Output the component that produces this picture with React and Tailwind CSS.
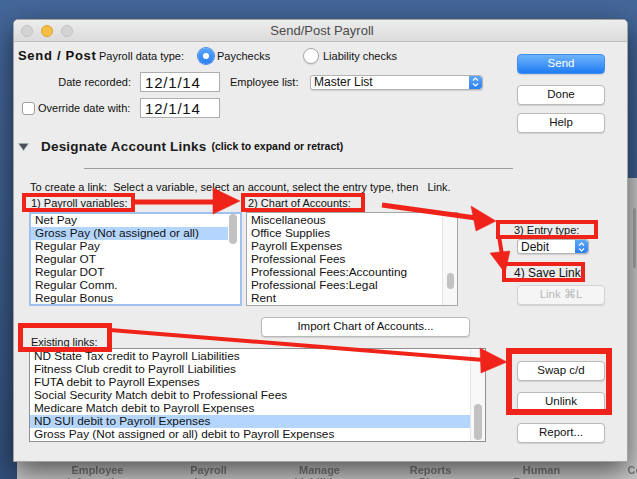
import React from "react";

const payrollVars = [
  "Net Pay",
  "Gross Pay (Not assigned or all)",
  "Regular Pay",
  "Regular OT",
  "Regular DOT",
  "Regular Comm.",
  "Regular Bonus",
];

const accounts = [
  "Miscellaneous",
  "Office Supplies",
  "Payroll Expenses",
  "Professional Fees",
  "Professional Fees:Accounting",
  "Professional Fees:Legal",
  "Rent",
];

const links = [
  "ND State Tax credit to Payroll Liabilities",
  "Fitness Club credit to Payroll Liabilities",
  "FUTA debit to Payroll Expenses",
  "Social Security Match debit to Professional Fees",
  "Medicare Match debit to Payroll Expenses",
  "ND SUI debit to Payroll Expenses",
  "Gross Pay (Not assigned or all) debit to Payroll Expenses",
];

const toolbar = [
  ["Employee", "Information"],
  ["Payroll", "Items"],
  ["Manage", "Liabilities"],
  ["Reports", "Plus"],
  ["Human", "Resources"],
  ["Company", "Info"],
];

function MacButton({ children, primary, disabled, className = "" }) {
  const look = primary
    ? "border-[#3f8ef0] bg-gradient-to-b from-[#6cb3fb] to-[#1c7cf4] text-white"
    : disabled
    ? "border-[#d3d3d3] bg-[#f5f5f5] text-[#b9b9b9]"
    : "border-[#b9b9b9] bg-white text-[#111]";
  return (
    <div
      className={`flex h-[20px] w-[88px] items-center justify-center rounded-[4px] border text-[11.5px] shadow-[0_1px_1px_rgba(0,0,0,0.12)] ${look} ${className}`}
    >
      {children}
    </div>
  );
}

function Stepper() {
  return (
    <div className="flex h-full w-[13px] flex-col items-center justify-center rounded-r-[3px] bg-gradient-to-b from-[#5ea7fa] to-[#2a7ff1]">
      <svg width="7" height="10" viewBox="0 0 7 10" fill="none" stroke="white" strokeWidth="1.2">
        <path d="M1 3.5 L3.5 1 L6 3.5" />
        <path d="M1 6.5 L3.5 9 L6 6.5" />
      </svg>
    </div>
  );
}

function Select({ label, className }) {
  return (
    <div
      className={`flex h-[15px] items-stretch overflow-hidden rounded-[3px] border border-[#b4b4b4] bg-white shadow-[0_1px_1px_rgba(0,0,0,0.12)] ${className}`}
    >
      <div className="flex flex-1 items-center pl-[3px] text-[12px] leading-none text-[#111]">{label}</div>
      <Stepper />
    </div>
  );
}

function Radio({ on }) {
  return on ? (
    <div className="flex h-[16px] w-[16px] items-center justify-center rounded-full bg-gradient-to-b from-[#5aa6fb] to-[#2a7ff1] shadow-[0_0_0_1px_#3b86ea]">
      <div className="h-[6px] w-[6px] rounded-full bg-white" />
    </div>
  ) : (
    <div className="h-[16px] w-[16px] rounded-full border border-[#a9a9a9] bg-white shadow-[0_1px_1px_rgba(0,0,0,0.1)]" />
  );
}

function DateInput() {
  return (
    <div className="flex h-[20px] w-[80px] items-center border border-[#aeaeae] bg-white pl-[4px] text-[15px] leading-none tracking-[0.8px] text-[#111]">
      12/1/14
    </div>
  );
}

function Rows({ items, selected }) {
  return (
    <div className="flex-1 overflow-hidden">
      {items.map((t, i) => (
        <div
          key={t}
          className={`h-[13px] whitespace-nowrap pl-[4px] text-[11.8px] leading-[13px] text-[#111] ${
            i === selected ? "bg-[#b4d6fe]" : ""
          }`}
        >
          {t}
        </div>
      ))}
    </div>
  );
}

function RedBox({ className }) {
  return <div className={`pointer-events-none absolute border-[#f0231b] ${className}`} />;
}

export default function App() {
  return (
    <div className="relative h-[479px] w-[637px] overflow-hidden bg-gradient-to-b from-[#44679a] via-[#3c5d8c] to-[#324f7a] font-['Liberation_Sans',Arial,sans-serif]">
      {/* app window behind the dialog */}
      <div className="absolute left-[17px] top-[178px] flex h-[320px] w-[660px] flex-col justify-end bg-[#cdcdcd]">
        <div className="absolute left-[616px] top-[30px] h-[60px] w-[3px] rounded bg-[#a9a9a9]" />
        <div className="flex pb-[10px] pl-[25px] blur-[0.4px]">
          {toolbar.map(([a, b]) => (
            <div key={a} className="w-[111px] shrink-0 text-center text-[11px] font-bold leading-[12px] text-[#7c7c7c]">
              <div>{a}</div>
              <div>{b}</div>
            </div>
          ))}
        </div>
      </div>

      {/* dialog */}
      <div className="absolute left-[13px] top-[19px] flex h-[443px] w-[615px] flex-col overflow-hidden rounded-t-[5px] border border-[#a3a3a3] bg-[#ececec] shadow-[0_10px_28px_rgba(0,0,0,0.6)]">
        <div className="relative flex h-[22px] shrink-0 items-center border-b border-[#bdbdbd] bg-gradient-to-b from-[#ededed] to-[#dbdbdb] pl-[7px]">
          <div className="flex gap-[8px]">
            <div className="h-[12px] w-[12px] rounded-full border border-[#c2c2c2] bg-[#d4d4d4]" />
            <div className="h-[12px] w-[12px] rounded-full border border-[#e0a12e] bg-[#f7be45]" />
            <div className="h-[12px] w-[12px] rounded-full border border-[#c2c2c2] bg-[#d4d4d4]" />
          </div>
          <div className="flex-1 pr-[56px] text-center text-[13px] text-[#4a4a4a]">Send/Post Payroll</div>
        </div>

        <div className="flex flex-1">
          {/* left column */}
          <div className="flex w-[500px] flex-col text-[11px] text-[#111]">
            <div className="mt-[4px] flex h-[20px] items-center">
              <div className="ml-[4px] w-[81px] text-[13px] font-bold tracking-[0.7px]">Send / Post</div>
              <div className="w-[99px]">Payroll data type:</div>
              <div className="flex w-[105px] items-center">
                <Radio on />
                <span className="ml-[3px]">Paychecks</span>
              </div>
              <div className="flex items-center">
                <Radio />
                <span className="ml-[4px]">Liability checks</span>
              </div>
            </div>

            <div className="mt-[6px] flex h-[20px] items-center">
              <div className="w-[117px] text-right">Date recorded:</div>
              <div className="ml-[9px]">
                <DateInput />
              </div>
              <div className="ml-[10px] w-[80px]">Employee list:</div>
              <Select label="Master List" className="w-[173px]" />
            </div>

            <div className="mt-[6px] flex h-[20px] items-center">
              <div className="ml-[8px] h-[13px] w-[13px] rounded-[3px] border border-[#9f9f9f] bg-white" />
              <div className="ml-[3px] w-[102px]">Override date with:</div>
              <DateInput />
            </div>

            <div className="mt-[21px] flex h-[16px] items-center">
              <svg className="ml-[4px]" width="11" height="8" viewBox="0 0 11 8">
                <path d="M0.5 0.5 L10.5 0.5 L5.5 7.5 Z" fill="#4e4d5c" stroke="#9bb" strokeWidth="0.6" />
              </svg>
              <div className="ml-[12px] text-[13.5px] font-bold tracking-[0.2px] text-[#1a1a1a]">Designate Account Links</div>
              <div className="ml-[5px] text-[10.5px] font-bold">(click to expand or retract)</div>
            </div>

            <div className="ml-[70px] mt-[13px] h-px w-[429px] bg-[#9c9c9c]" />

            <div className="ml-[16px] mt-[11px] flex h-[14px] items-center whitespace-pre">
              To create a link:  Select a variable, select an account, select the entry type, then   Link.
            </div>

            <div className="mt-[2px] flex h-[14px] items-center">
              <div className="ml-[17px] w-[217px]">1) Payroll variables:</div>
              <div>2) Chart of Accounts:</div>
            </div>

            <div className="mt-[2px] flex h-[94px]">
              <div className="ml-[15px] flex w-[213px] border-[2px] border-[#9ec1ee] bg-white">
                <Rows items={payrollVars} selected={1} />
                <div className="w-[12px]">
                  <div className="ml-[1px] h-[30px] w-[8px] rounded-full bg-[#c2c2c2]" />
                </div>
              </div>
              <div className="ml-[4px] flex w-[212px] border border-[#a6a6a6] bg-white pt-[1px]">
                <Rows items={accounts} />
                <div className="w-[15px] border-l border-[#e4e4e4] bg-[#f8f8f8]">
                  <div className="ml-[4px] mt-[59px] h-[16px] w-[7px] rounded-full bg-[#c2c2c2]" />
                </div>
              </div>
            </div>

            <div className="mt-[11px] flex h-[20px]">
              <MacButton className="ml-[247px] w-[209px]">Import Chart of Accounts...</MacButton>
            </div>

            <div className="ml-[17px] flex h-[11px] items-end text-[11px] leading-[11px]">Existing links:</div>

            <div className="ml-[15px] flex h-[94px] w-[457px] border border-[#8f8f8f] bg-white pt-[1px]">
              <Rows items={links} selected={5} />
              <div className="w-[15px] border-l border-[#e4e4e4] bg-[#f8f8f8]">
                <div className="ml-[3px] mt-[54px] h-[36px] w-[8px] rounded-full bg-[#c2c2c2]" />
              </div>
            </div>
          </div>

          {/* right column */}
          <div className="flex w-[95px] flex-col text-[11px] text-[#111]">
            <MacButton primary className="ml-[3px] mt-[12px]">Send</MacButton>
            <MacButton className="ml-[3px] mt-[11px]">Done</MacButton>
            <MacButton className="ml-[3px] mt-[8px]">Help</MacButton>
            <div className="mt-[90px] flex h-[14px] items-center">3) Entry type:</div>
            <Select label="Debit" className="ml-[3px] mt-[2px] h-[14px] w-[72px]" />
            <div className="mt-[12px] flex h-[14px] items-center text-[12px]">4) Save Link</div>
            <MacButton disabled className="ml-[3px] mt-[5px] h-[19px]">Link ⌘L</MacButton>
            <MacButton className="ml-[3px] mt-[56px]">Swap c/d</MacButton>
            <MacButton className="ml-[3px] mt-[11px]">Unlink</MacButton>
            <MacButton className="ml-[3px] mt-[11px]">Report...</MacButton>
          </div>
        </div>
      </div>

      {/* red annotations */}
      <RedBox className="left-[22px] top-[193px] h-[19px] w-[113px] border-[4px]" />
      <RedBox className="left-[241px] top-[193px] h-[19px] w-[124px] border-[4px]" />
      <RedBox className="left-[496px] top-[220px] h-[19px] w-[102px] border-[4px]" />
      <RedBox className="left-[502px] top-[262px] h-[20px] w-[83px] border-[4px]" />
      <RedBox className="left-[18px] top-[323px] h-[29px] w-[94px] border-[5px]" />
      <RedBox className="left-[506px] top-[348px] h-[67px] w-[106px] border-[6px]" />

      <svg className="pointer-events-none absolute left-0 top-0" width="637" height="479" viewBox="0 0 637 479">
        <g fill="#f0231b" stroke="#f0231b">
          <line x1="135" y1="202" x2="216" y2="202" strokeWidth="5" />
          <polygon points="213,188 213,214 240,201" strokeWidth="0.5" />
          <line x1="382" y1="205" x2="476" y2="218" strokeWidth="5" />
          <polygon points="471,206 476,231 496,221" strokeWidth="0.5" />
          <line x1="499" y1="236" x2="502" y2="255" strokeWidth="4" />
          <polygon points="490,253 510,251 505,273" strokeWidth="0.5" />
          <line x1="110" y1="330" x2="484" y2="360" strokeWidth="4" />
          <polygon points="480,348 481,373 507,362" strokeWidth="0.5" />
        </g>
      </svg>
    </div>
  );
}
